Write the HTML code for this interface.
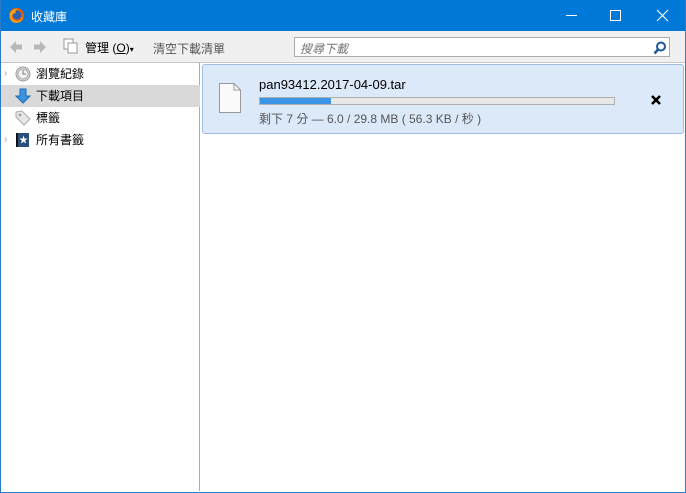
<!DOCTYPE html>
<html><head><meta charset="utf-8"><style>
*{margin:0;padding:0;box-sizing:border-box}
body{width:686px;height:493px;overflow:hidden;background:#fff;font-family:"Liberation Sans","Noto Sans CJK TC",sans-serif;font-size:12px;color:#000;position:relative}
.abs{position:absolute}
#win{position:absolute;left:0;top:0;width:686px;height:493px;border:1px solid #2b7bc6;border-top:none}
#title{left:0;top:0;width:686px;height:31px;background:#0078d7;color:#fff}
#tb{left:1px;top:31px;width:684px;height:32px;background:#f0f0f0;border-bottom:1px solid #c8c8c8}
#side{left:1px;top:63px;width:199px;height:428px;background:#fff;border-right:1px solid #a0aec0}
.row{position:absolute;left:0;width:199px;height:22px;line-height:22px}
.lbl{position:absolute;left:35px;font-size:12px}
#item{left:202px;top:64px;width:482px;height:70px;background:#dce9f9;border:1px solid #9fbde0;border-radius:3px}
</style></head><body>
<div class="abs" id="title">
  <svg class="abs" style="left:8px;top:7px" width="17" height="17" viewBox="0 0 17 17"><circle cx="8.5" cy="8.5" r="7.5" fill="#e66000"/><circle cx="9" cy="8" r="4.5" fill="#2f5fb0"/><path d="M2 6 Q5 1 10 2 Q6 4 8 6 Q4 6 4 10 Q5 14 10 14 Q14 13 15 9 Q15 15 8 16 Q1 15 2 6Z" fill="#f7a21b"/></svg>
  <div class="abs" style="left:31px;top:8px;font-size:12px">收藏庫</div>
  <div class="abs" style="left:566px;top:15px;width:11px;height:1px;background:#fff"></div>
  <div class="abs" style="left:610px;top:10px;width:11px;height:11px;border:1px solid #fff"></div>
  <svg class="abs" style="left:656px;top:9px" width="13" height="13"><path d="M1 1L12 12M12 1L1 12" stroke="#fff" stroke-width="1.1"/></svg>
</div>
<div class="abs" id="tb">
  <svg class="abs" style="left:8px;top:9px" width="14" height="14"><path d="M1 7L7 1V4.5H13V9.5H7V13Z" fill="#b8b8b8"/></svg>
  <svg class="abs" style="left:32px;top:9px" width="14" height="14"><path d="M13 7L7 1V4.5H1V9.5H7V13Z" fill="#b8b8b8"/></svg>
  <svg class="abs" style="left:62px;top:7px" width="16" height="16"><rect x="1" y="1" width="9" height="10" fill="#fff" stroke="#999"/><rect x="5" y="5" width="9" height="10" fill="#fff" stroke="#999"/></svg>
  <div class="abs" style="left:84px;top:8px">管理 (<u>O</u>)<span style="font-size:8px">▾</span></div>
  <div class="abs" style="left:152px;top:9px;color:#555">清空下載清單</div>
  <div class="abs" style="left:293px;top:6px;width:376px;height:20px;background:#fff;border:1px solid #aaa">
    <div class="abs" style="left:5px;top:2px;color:#777;font-style:italic">搜尋下載</div>
    <svg class="abs" style="left:358px;top:3px" width="14" height="14"><circle cx="8" cy="5.5" r="4" fill="none" stroke="#1a5a9a" stroke-width="2"/><path d="M5 8.5L1.5 12.5" stroke="#1a5a9a" stroke-width="2.5"/></svg>
  </div>
</div>
<div class="abs" id="side">
  <div class="row" style="top:0"><span class="abs" style="left:3px;color:#999;font-size:10px">›</span>
    <svg class="abs" style="left:14px;top:3px" width="16" height="16"><circle cx="8" cy="8" r="7" fill="#ddd" stroke="#999"/><circle cx="8" cy="8" r="5" fill="#f4f4f4" stroke="#aaa"/><path d="M8 4V8H11" stroke="#777" fill="none"/></svg>
    <span class="lbl">瀏覽紀錄</span></div>
  <div class="row" style="top:22px;background:#d9d9d9">
    <svg class="abs" style="left:14px;top:3px" width="16" height="16"><path d="M5 1H11V8H15L8 15L1 8H5Z" fill="#3a95e0" stroke="#1d6ab5"/></svg>
    <span class="lbl">下載項目</span></div>
  <div class="row" style="top:44px">
    <svg class="abs" style="left:14px;top:3px" width="16" height="16"><path d="M1 2L7 1L15 9L9 15L1 7Z" fill="#e6e6e6" stroke="#aaa"/><circle cx="5" cy="5" r="1.3" fill="#999"/></svg>
    <span class="lbl">標籤</span></div>
  <div class="row" style="top:66px"><span class="abs" style="left:3px;color:#999;font-size:10px">›</span>
    <svg class="abs" style="left:14px;top:3px" width="16" height="16"><rect x="1" y="1" width="13" height="14" fill="#2a4f7a"/><rect x="1" y="1" width="2" height="14" fill="#111"/><text x="8.5" y="11" font-size="9" fill="#fff" text-anchor="middle">★</text></svg>
    <span class="lbl">所有書籤</span></div>
</div>
<div class="abs" id="item">
  <svg class="abs" style="left:15px;top:17px" width="24" height="32"><path d="M1.5 1.5H16L22.5 8V30.5H1.5Z" fill="#fafafa" stroke="#999"/><path d="M16 1.5V8H22.5" fill="none" stroke="#999"/></svg>
  <div class="abs" style="left:56px;top:12px;font-size:13px">pan93412.2017-04-09.tar</div>
  <div class="abs" style="left:56px;top:32px;width:356px;height:8px;background:#e8e8e8;border:1px solid #b0b0b0"><div style="width:71px;height:6px;background:#3c94e6"></div></div>
  <div class="abs" style="left:56px;top:45px;color:#555">剩下 7 分 — 6.0 / 29.8 MB ( 56.3 KB / 秒 )</div>
  <svg class="abs" style="left:448px;top:30px" width="10" height="10"><path d="M1 1L9 9M9 1L1 9" stroke="#000" stroke-width="2.5"/></svg>
</div>
<div id="win"></div>
</body></html>
